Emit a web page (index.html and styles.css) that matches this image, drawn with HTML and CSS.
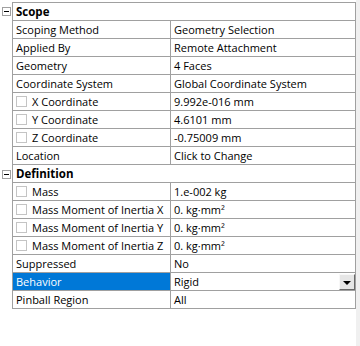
FILE: index.html
```html
<!DOCTYPE html>
<html lang="en">
<head>
    <meta charset="UTF-8">
    <title>Remote Point Details</title>
    <link rel="stylesheet" href="styles.css">
</head>
<body>
    <div class="panel">
        <div class="grid">
            <div class="row group first">
                <div class="gutter"><span class="toggle"></span></div>
                <div class="cells"><div class="name">Scope</div></div>
            </div>
            <div class="row">
                <div class="gutter"></div>
                <div class="cells">
                    <div class="name">Scoping Method</div>
                    <div class="value">Geometry Selection</div>
                </div>
            </div>
            <div class="row">
                <div class="gutter"></div>
                <div class="cells">
                    <div class="name">Applied By</div>
                    <div class="value">Remote Attachment</div>
                </div>
            </div>
            <div class="row">
                <div class="gutter"></div>
                <div class="cells">
                    <div class="name">Geometry</div>
                    <div class="value">4 Faces</div>
                </div>
            </div>
            <div class="row">
                <div class="gutter"></div>
                <div class="cells">
                    <div class="name">Coordinate System</div>
                    <div class="value">Global Coordinate System</div>
                </div>
            </div>
            <div class="row">
                <div class="gutter"></div>
                <div class="cells">
                    <div class="name"><span class="check"></span>X Coordinate</div>
                    <div class="value">9.992e-016 mm</div>
                </div>
            </div>
            <div class="row">
                <div class="gutter"></div>
                <div class="cells">
                    <div class="name"><span class="check"></span>Y Coordinate</div>
                    <div class="value">4.6101 mm</div>
                </div>
            </div>
            <div class="row">
                <div class="gutter"></div>
                <div class="cells">
                    <div class="name"><span class="check"></span>Z Coordinate</div>
                    <div class="value">-0.75009 mm</div>
                </div>
            </div>
            <div class="row">
                <div class="gutter"></div>
                <div class="cells">
                    <div class="name">Location</div>
                    <div class="value">Click to Change</div>
                </div>
            </div>
            <div class="row group">
                <div class="gutter"><span class="toggle"></span></div>
                <div class="cells"><div class="name">Definition</div></div>
            </div>
            <div class="row">
                <div class="gutter"></div>
                <div class="cells">
                    <div class="name"><span class="check"></span>Mass</div>
                    <div class="value">1.e-002 kg</div>
                </div>
            </div>
            <div class="row">
                <div class="gutter"></div>
                <div class="cells">
                    <div class="name"><span class="check"></span>Mass Moment of Inertia X</div>
                    <div class="value">0. kg·mm²</div>
                </div>
            </div>
            <div class="row">
                <div class="gutter"></div>
                <div class="cells">
                    <div class="name"><span class="check"></span>Mass Moment of Inertia Y</div>
                    <div class="value">0. kg·mm²</div>
                </div>
            </div>
            <div class="row">
                <div class="gutter"></div>
                <div class="cells">
                    <div class="name"><span class="check"></span>Mass Moment of Inertia Z</div>
                    <div class="value">0. kg·mm²</div>
                </div>
            </div>
            <div class="row">
                <div class="gutter"></div>
                <div class="cells">
                    <div class="name">Suppressed</div>
                    <div class="value">No</div>
                </div>
            </div>
            <div class="row selected">
                <div class="gutter"></div>
                <div class="cells">
                    <div class="name">Behavior</div>
                    <div class="value dropdown">
                        <span>Rigid</span>
                        <span class="drop-btn"><span class="arrow"></span></span>
                    </div>
                </div>
            </div>
            <div class="row">
                <div class="gutter"></div>
                <div class="cells">
                    <div class="name">Pinball Region</div>
                    <div class="value">All</div>
                </div>
            </div>
        </div>
        <div class="scroll-track"></div>
    </div>
</body>
</html>
```

FILE: styles.css
```css
html, body {
    margin: 0;
    padding: 0;
    background-color: #fff;
}

body {
    font-family: 'Open Sans', 'Liberation Sans', sans-serif;
    font-size: 11px;
    color: #000;
}

.panel {
    display: flex;
    width: 360px;
    height: 346px;
}

.grid {
    flex: 1;
    padding-top: 2px;
}

.scroll-track {
    width: 4px;
    background-color: #f0f0f0;
}

.row {
    display: flex;
    height: 18px;
}

.gutter {
    width: 12px;
    position: relative;
}

.toggle {
    position: absolute;
    left: 2px;
    top: 5px;
    width: 7px;
    height: 7px;
    border: 1px solid #a0a0a0;
    background-color: #fff;
}

.toggle::after {
    content: "";
    position: absolute;
    left: 1px;
    top: 3px;
    width: 5px;
    height: 1px;
    background-color: #000;
}

.cells {
    flex: 1;
    display: flex;
    border-left: 1px solid #a0a0a0;
    border-right: 1px solid #a0a0a0;
    border-bottom: 1px solid #a0a0a0;
}

.first .cells {
    border-top: 1px solid #a0a0a0;
}

.first {
    height: 19px;
}

.name {
    width: 154px;
    padding-left: 3px;
    border-right: 1px solid #a0a0a0;
    display: flex;
    align-items: center;
    white-space: nowrap;
    overflow: hidden;
}

.group .name {
    border-right: none;
    font-weight: bold;
    font-size: 11.5px;
    flex: 1;
}

.value {
    flex: 1;
    padding-left: 3px;
    display: flex;
    align-items: center;
    white-space: nowrap;
}

.check {
    display: inline-block;
    width: 9px;
    height: 9px;
    border: 1px solid #c4c4c4;
    margin-right: 5px;
    flex-shrink: 0;
}

.selected .name {
    background-color: #0078d7;
    color: #fff;
}

.dropdown {
    justify-content: space-between;
}

.drop-btn {
    width: 14px;
    height: 14px;
    margin-top: 1px;
    background-color: #e6e6e6;
    border-top: 1px solid #f8f8f8;
    border-left: 1px solid #f8f8f8;
    border-right: 1px solid #696969;
    border-bottom: 1px solid #696969;
    display: flex;
    align-items: center;
    justify-content: center;
}

.arrow {
    width: 0;
    height: 0;
    border-left: 4px solid transparent;
    border-right: 4px solid transparent;
    border-top: 4px solid #000;
    margin-top: 1px;
}
```
